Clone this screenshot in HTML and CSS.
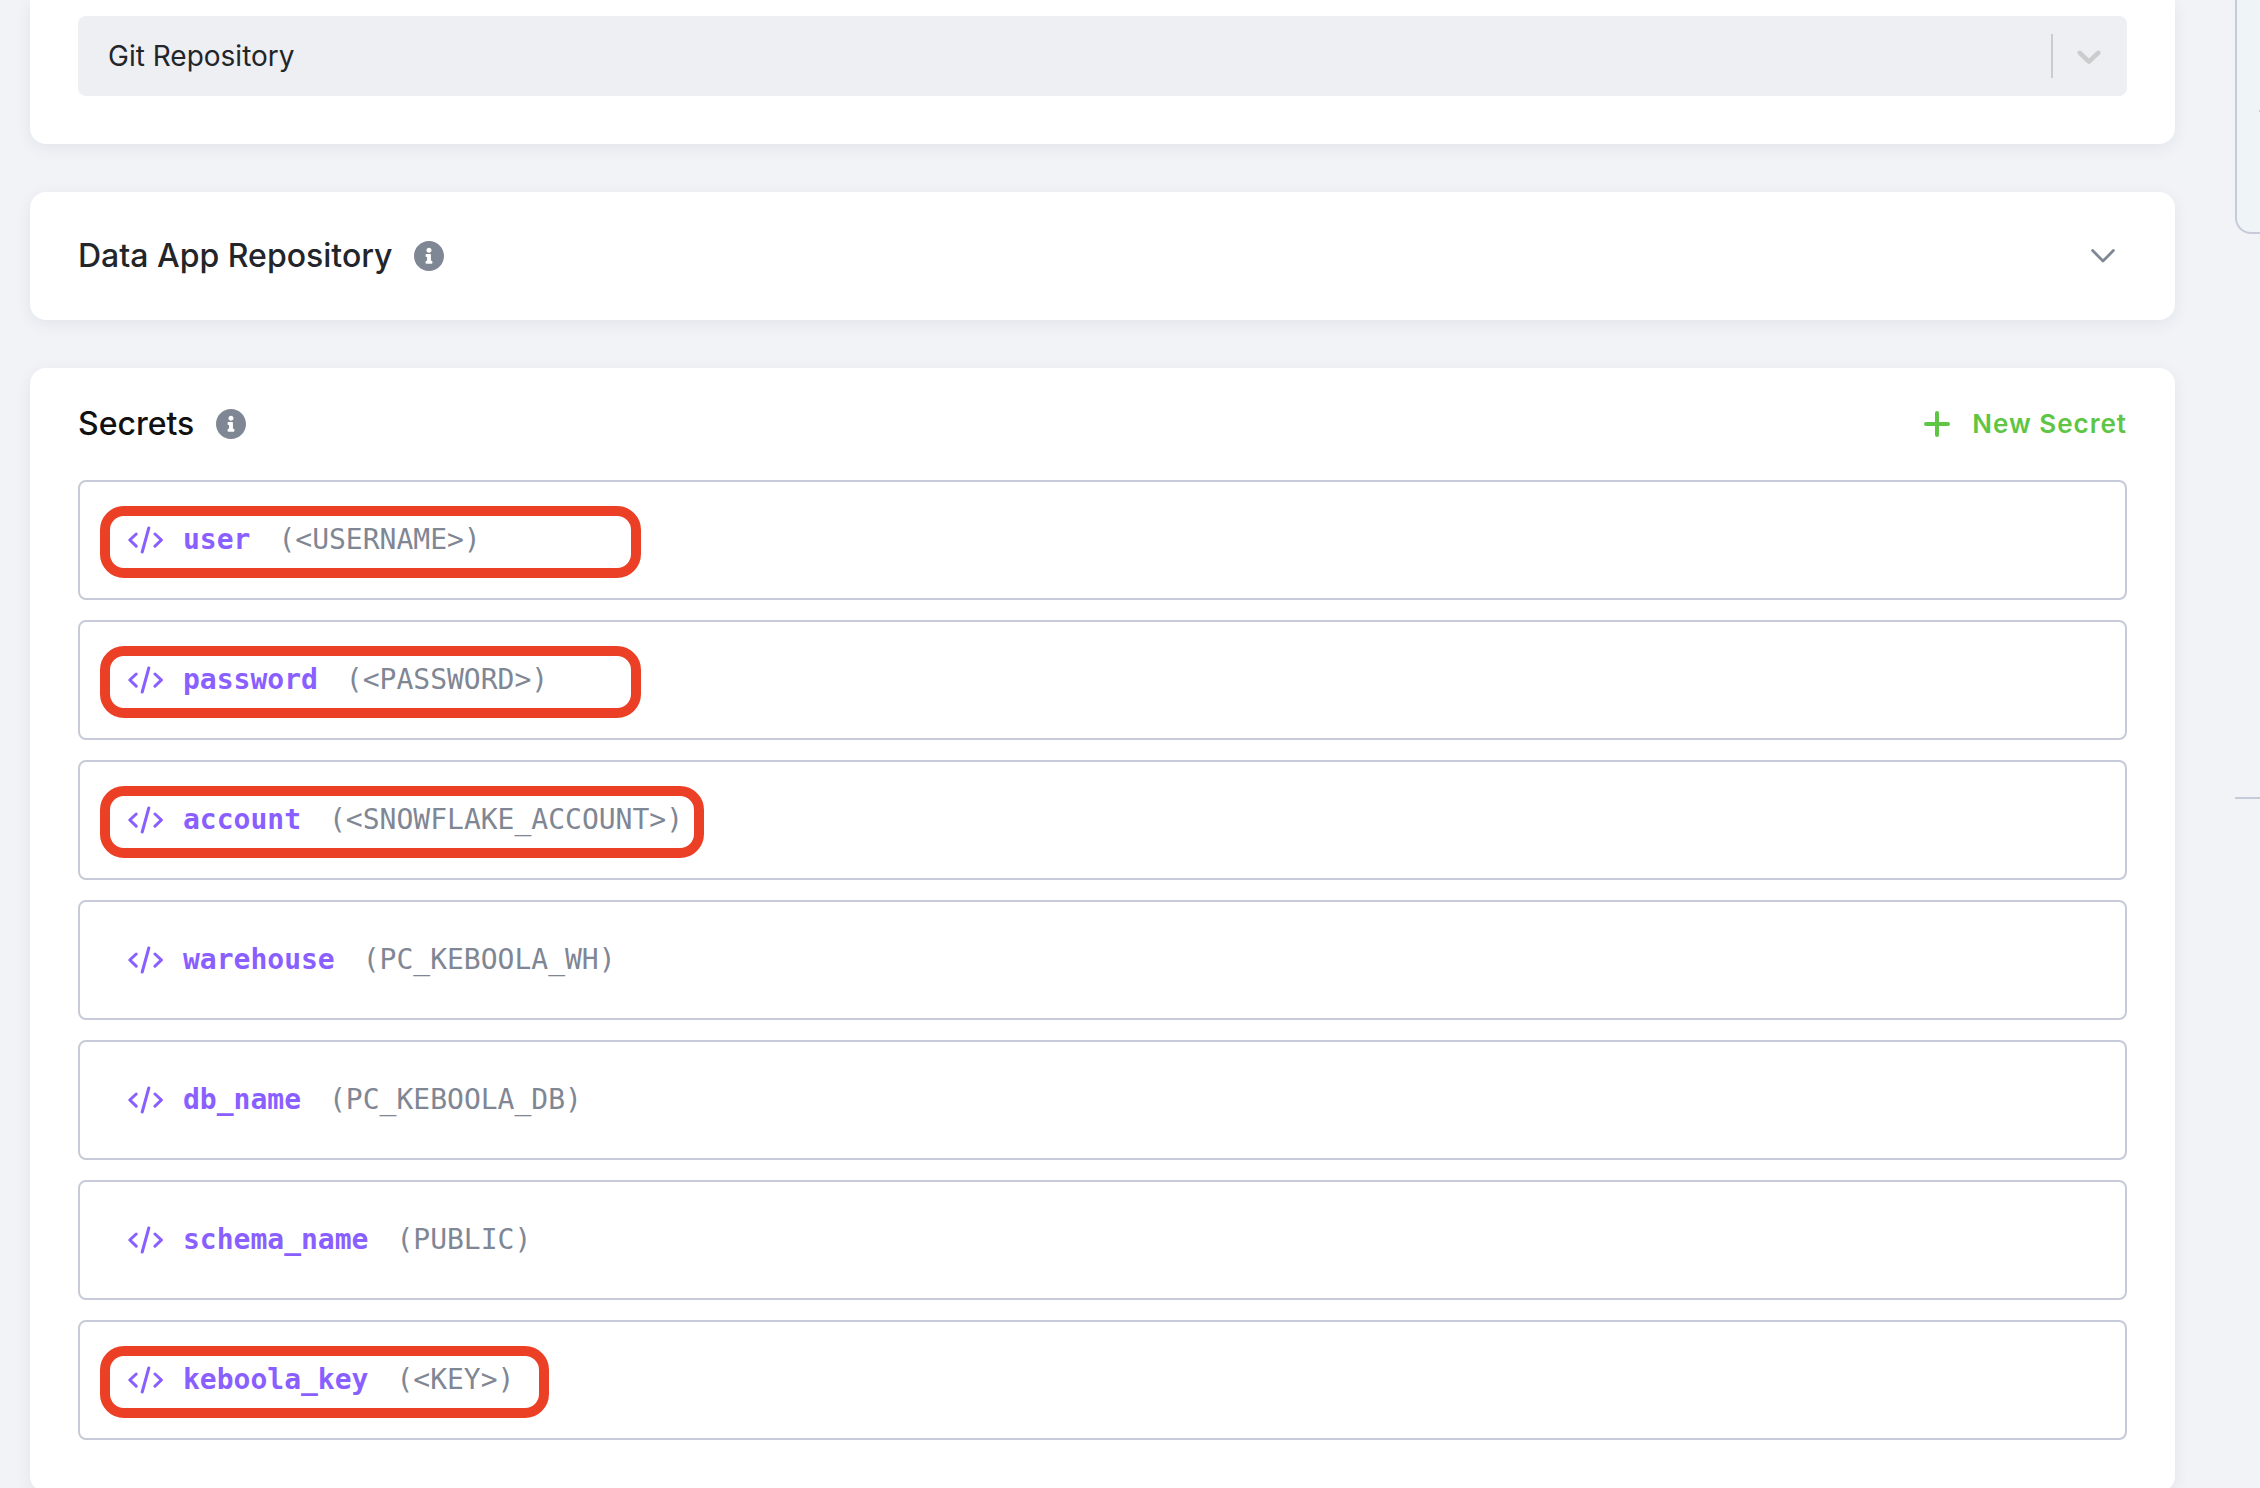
FILE: index.html
```html
<!DOCTYPE html>
<html lang="en">
<head>
    <meta charset="UTF-8">
    <title>Data App Configuration</title>
    <link rel="stylesheet" href="styles.css">
</head>
<body>
    <svg width="0" height="0" class="sprite" aria-hidden="true">
        <symbol id="icon-info" viewBox="8 8 496 496">
            <path d="M256 8C119.043 8 8 119.083 8 256c0 136.997 111.043 248 248 248s248-111.003 248-248C504 119.083 392.957 8 256 8zm0 110c23.196 0 42 18.804 42 42s-18.804 42-42 42-42-18.804-42-42 18.804-42 42-42zm56 254c0 6.627-5.373 12-12 12h-88c-6.627 0-12-5.373-12-12v-24c0-6.627 5.373-12 12-12h12v-64h-12c-6.627 0-12-5.373-12-12v-24c0-6.627 5.373-12 12-12h64c6.627 0 12 5.373 12 12v100h12c6.627 0 12 5.373 12 12v24z"/>
        </symbol>
        <symbol id="icon-code" viewBox="0 0 36 28">
            <path d="M8.2 8 1.8 14l6.4 6.2M20.8 2 14.2 26M27 8l6.4 6-6.4 6.2"/>
        </symbol>
    </svg>

    <div class="page">
        <main class="content">
            <section class="card card-type">
                <div class="select">
                    <select aria-label="Deployment type" disabled>
                        <option>Git Repository</option>
                    </select>
                    <span class="select-arrow">
                        <svg width="40" height="40" viewBox="0 0 20 20"><path d="M4.516 7.548c0.436-0.446 1.043-0.481 1.576 0l3.908 3.747 3.908-3.747c0.533-0.481 1.141-0.446 1.574 0 0.436 0.445 0.408 1.197 0 1.615-0.406 0.418-4.695 4.502-4.695 4.502-0.217 0.223-0.502 0.335-0.787 0.335s-0.57-0.112-0.789-0.335c0 0-4.287-4.084-4.695-4.502s-0.436-1.17 0-1.615z"/></svg>
                    </span>
                </div>
            </section>

            <section class="card card-repo">
                <h2>Data App Repository</h2>
                <svg class="info"><use href="#icon-info"/></svg>
                <button type="button" class="toggle" aria-label="Expand">
                    <svg width="24" height="14" viewBox="0 0 24 14"><path d="M1.6 1.6 12 12 22.4 1.6"/></svg>
                </button>
            </section>

            <section class="card card-secrets">
                <header class="secrets-head">
                    <h2>Secrets</h2>
                    <svg class="info"><use href="#icon-info"/></svg>
                    <button type="button" class="btn-new">
                        <svg width="26" height="26" viewBox="0 0 26 26"><path d="M13 2v22M2 13h22"/></svg>
                        New Secret
                    </button>
                </header>

                <ul class="secrets">
                    <li>
                        <svg class="code"><use href="#icon-code"/></svg>
                        <strong>user</strong><span>(&lt;USERNAME&gt;)</span>
                        <i class="mark"></i>
                    </li>
                    <li>
                        <svg class="code"><use href="#icon-code"/></svg>
                        <strong>password</strong><span>(&lt;PASSWORD&gt;)</span>
                        <i class="mark"></i>
                    </li>
                    <li>
                        <svg class="code"><use href="#icon-code"/></svg>
                        <strong>account</strong><span>(&lt;SNOWFLAKE_ACCOUNT&gt;)</span>
                        <i class="mark mark-wide"></i>
                    </li>
                    <li>
                        <svg class="code"><use href="#icon-code"/></svg>
                        <strong>warehouse</strong><span>(PC_KEBOOLA_WH)</span>
                    </li>
                    <li>
                        <svg class="code"><use href="#icon-code"/></svg>
                        <strong>db_name</strong><span>(PC_KEBOOLA_DB)</span>
                    </li>
                    <li>
                        <svg class="code"><use href="#icon-code"/></svg>
                        <strong>schema_name</strong><span>(PUBLIC)</span>
                    </li>
                    <li>
                        <svg class="code"><use href="#icon-code"/></svg>
                        <strong>keboola_key</strong><span>(&lt;KEY&gt;)</span>
                        <i class="mark mark-narrow"></i>
                    </li>
                </ul>
            </section>
        </main>

        <!-- sidebar runs off the right edge -->
        <aside class="sidebar">
            <div class="side-box"><hr></div>
            <hr class="side-line">
        </aside>
    </div>
</body>
</html>
```
FILE: styles.css
```css
* { box-sizing: border-box; }
body { margin: 0; background: #f2f3f7; color: #222529; font-family: Inter, "Liberation Sans", sans-serif; font-size: 28px; }
.sprite { position: absolute; }

.page { display: flex; gap: 60px; height: 100vh; padding-left: 30px; overflow: hidden; }
.content { flex: 1; min-width: 0; display: flex; flex-direction: column; gap: 48px; }

.card { flex-shrink: 0; background: #fff; border-radius: 16px; padding: 48px; box-shadow: 0 4px 16px rgba(0, 70, 90, 0.08); }
.card-type { padding-top: 16px; border-radius: 0 0 16px 16px; }
.card-repo { display: flex; align-items: center; height: 128px; }
.card-secrets { padding: 32px 48px; }

h2 { margin: 0; font-size: 32px; line-height: 48px; font-weight: 500; }
.info { width: 30px; height: 30px; margin-left: 22px; fill: #7f8694; }

/* deployment type */
.select { display: flex; align-items: center; height: 80px; background: #edeff3; border-radius: 8px; }
.select select { flex: 1; height: 80px; padding: 0 30px; appearance: none; background: none; border: none; color: #222529; font: inherit; opacity: 1; }
.select-arrow { display: flex; align-items: center; height: 44px; padding: 0 18px 0 16px; border-left: 2px solid #ccc; fill: #ccc; }

/* headers */
.toggle { display: flex; margin-left: auto; padding: 12px; background: none; border: none; cursor: pointer; }
.toggle path { fill: none; stroke: #7f8694; stroke-width: 2.8; stroke-linecap: round; stroke-linejoin: round; }
.secrets-head { display: flex; align-items: center; height: 48px; color: #111; }
.btn-new { display: flex; align-items: center; gap: 22px; margin-left: auto; padding: 0; background: none; border: none; color: #5fc544; font: 600 26px/48px Inter, "Liberation Sans", sans-serif; letter-spacing: 1px; cursor: pointer; }
.btn-new path { stroke: #5fc544; stroke-width: 4; stroke-linecap: round; }

/* secrets list */
.secrets { list-style: none; margin: 32px 0 20px; padding: 0; display: flex; flex-direction: column; gap: 20px; }
.secrets li { position: relative; display: flex; align-items: center; height: 120px; padding-left: 48px; border: 2px solid #c7cad8; border-radius: 8px; color: #7f8694; font: 28px/40px "DejaVu Sans Mono", monospace; }
.secrets strong { margin: 0 28px 0 19px; color: #8a5fff; }
.code { width: 36px; height: 28px; fill: none; stroke: #8a5fff; stroke-width: 3; stroke-linecap: round; stroke-linejoin: round; }

/* red highlight frames drawn over the rows */
.mark { position: absolute; left: 20px; top: 24px; width: 541px; height: 72px; border: 10px solid #eb4026; border-radius: 24px; }
.mark-wide { width: 604px; }
.mark-narrow { width: 449px; }

/* sidebar */
.sidebar { flex: 0 0 25px; overflow: hidden; }
.side-box { width: 480px; height: 234px; padding: 110px 22px 0; background: #eff4f7; border: 2px solid #c7cad8; border-top: none; border-radius: 0 0 16px 16px; }
.sidebar hr { margin: 0; border: none; border-top: 2px solid #c7cad8; }
.sidebar .side-line { margin-top: 563px; }
```
